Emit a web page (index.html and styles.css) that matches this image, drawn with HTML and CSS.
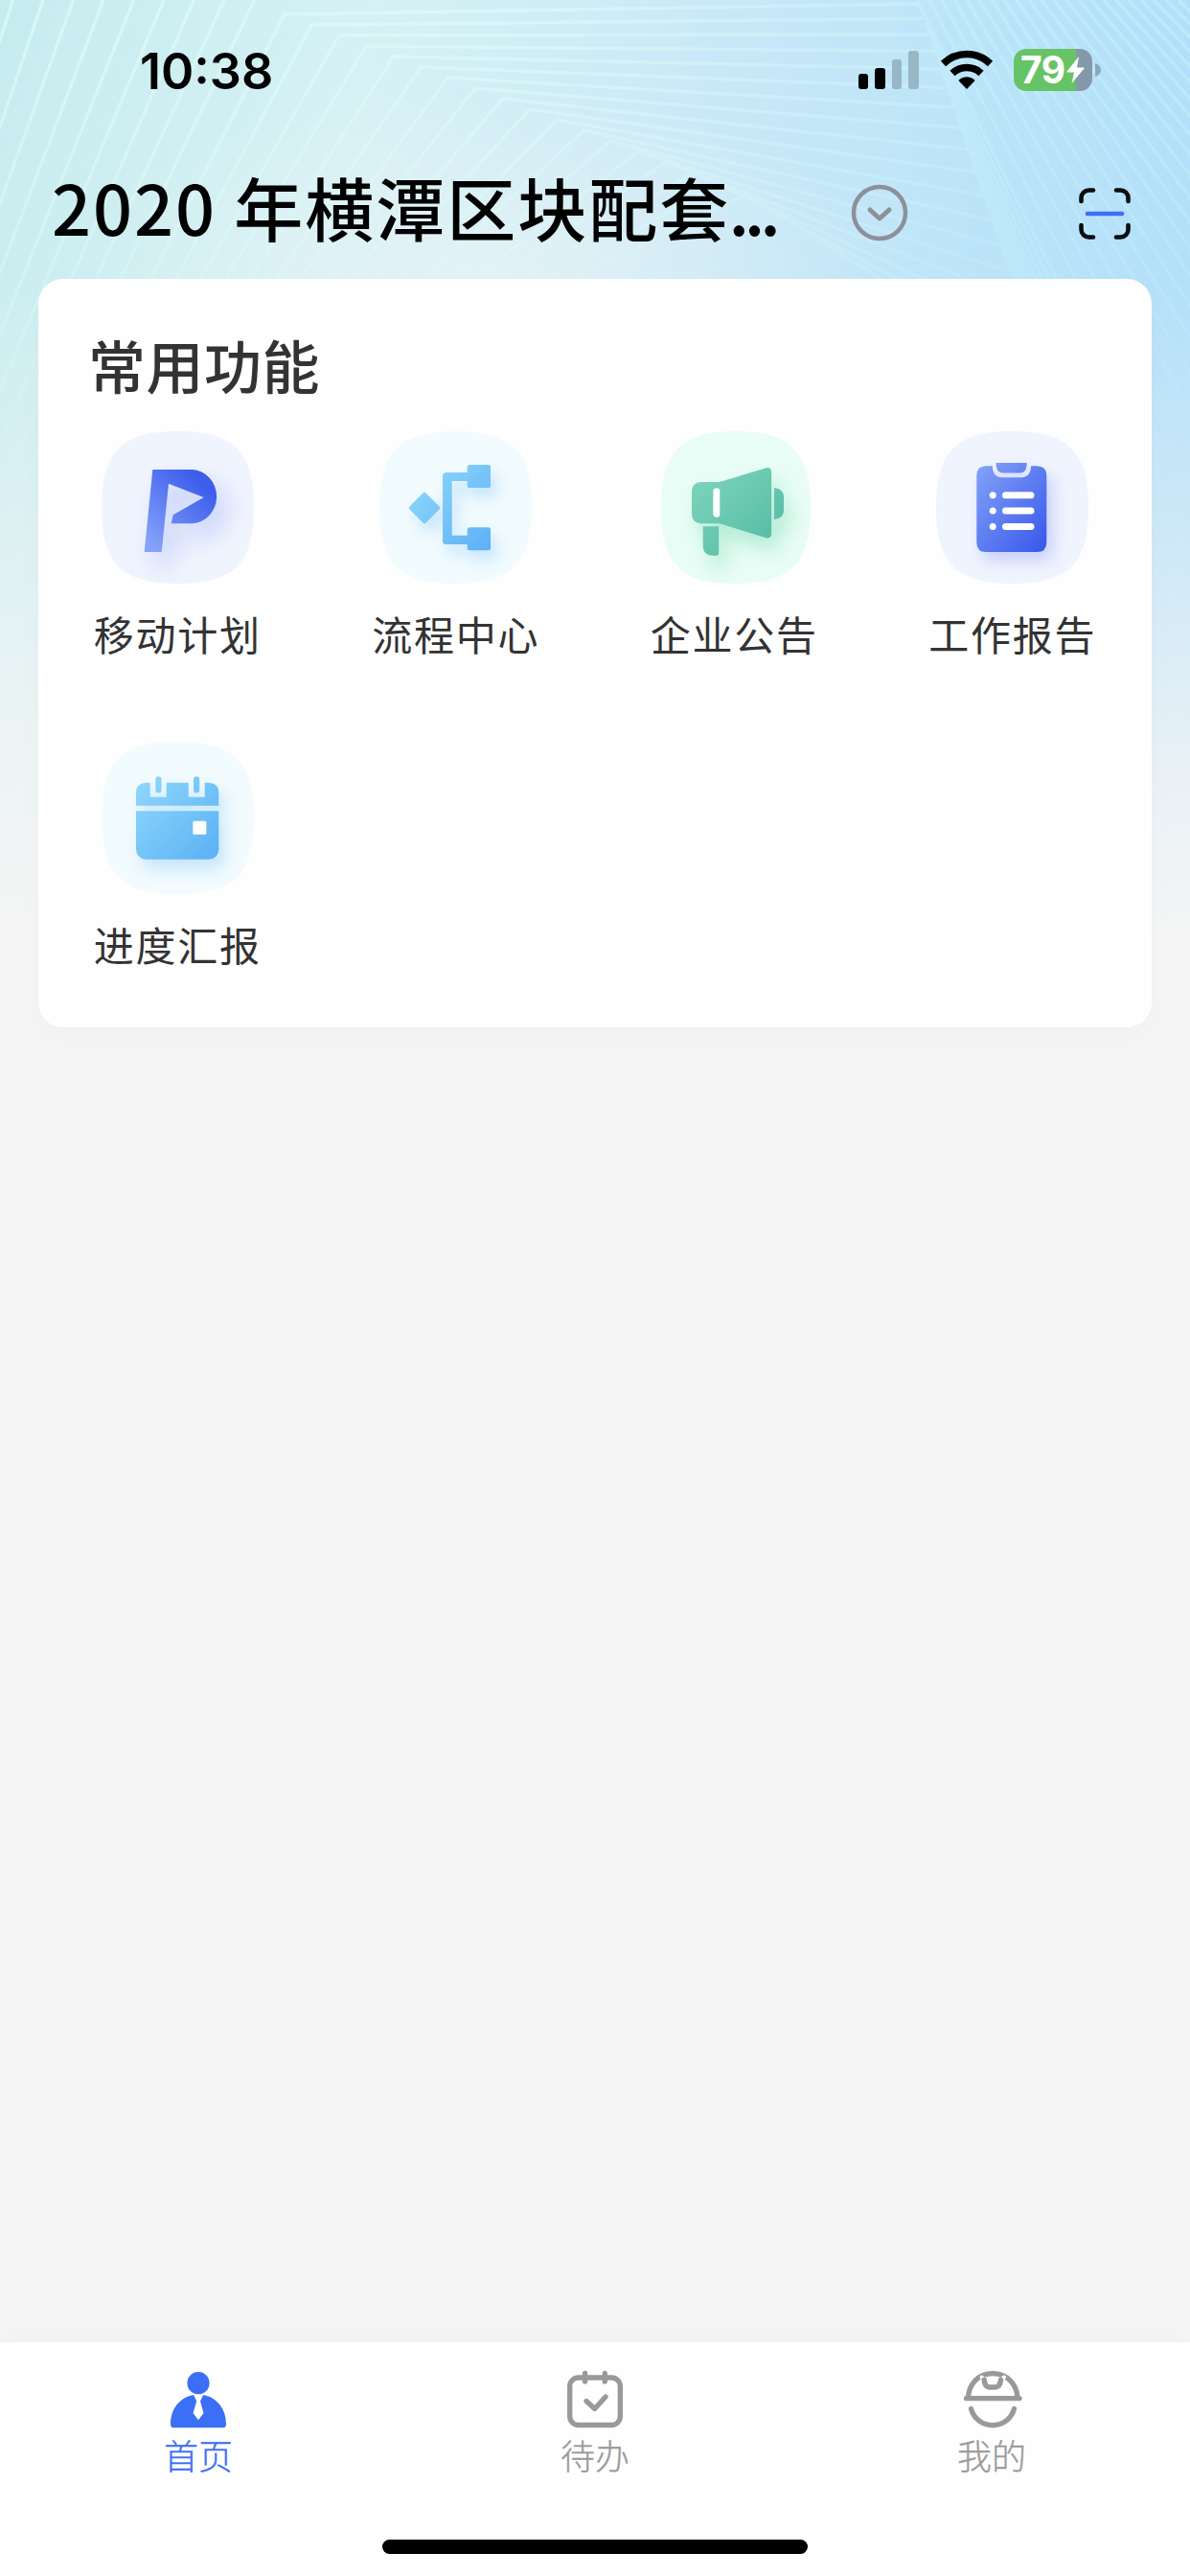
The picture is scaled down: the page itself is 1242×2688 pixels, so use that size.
FILE: index.html
```html
<!DOCTYPE html>
<html lang="zh-CN">
<head>
    <meta charset="UTF-8">
    <meta name="viewport" content="width=device-width, initial-scale=1.0">
    <title>首页</title>
    <link rel="stylesheet" href="styles.css">
</head>
<body>
    <svg class="backdrop" id="backdrop" viewBox="0 0 1242 1000"></svg>

    <div class="page">
        <header class="status-bar">
            <span class="time">10:38</span>
            <div class="status-icons">
                <svg width="63" height="40" viewBox="0 0 63 40">
                    <rect x="0" y="24" width="10" height="16" rx="3"/>
                    <rect x="17" y="18" width="11" height="22" rx="3"/>
                    <rect x="35" y="9" width="10" height="31" rx="3" fill="#97b6c6"/>
                    <rect x="52" y="0" width="11" height="40" rx="3" fill="#97b6c6"/>
                </svg>
                <svg class="wifi" width="56" height="42" viewBox="0 0 56 42">
                    <path d="M3.500 14.500a35 35 0 0 1 49 0M13 24.500a21.500 21.500 0 0 1 30 0" fill="none" stroke="#000" stroke-width="7.500"/>
                    <path d="M28 41l-8-8.200a1 1 0 0 1 0-1.500c4.500-4.100 11.500-4.100 16 0a1 1 0 0 1 0 1.500z"/>
                </svg>
                <div class="battery">
                    <span>79</span>
                    <svg width="19" height="28" viewBox="0 0 19 28"><path d="M13 0L0.500 15.500q-.5 1 .5 1h7L5.500 28 18.500 12.500q.5-1-.5-1h-7z" fill="#fff"/></svg>
                </div>
                <svg class="nub" width="6" height="14" viewBox="0 0 6 14"><path d="M0 0q6 2 6 7t-6 7z" fill="#8ca9b9"/></svg>
            </div>
        </header>

        <div class="title-bar">
            <h1>2020 年横潭区块配套<span class="dots">...</span></h1>
            <svg class="switch" width="60" height="60" viewBox="0 0 60 60" fill="none" stroke="#8e8f99" stroke-linecap="round" stroke-linejoin="round">
                <circle cx="30" cy="30" r="27" stroke-width="4.500"/>
                <path d="M20 27l10 9 10-9" stroke-width="5"/>
            </svg>
            <svg class="scan" width="54" height="54" viewBox="0 0 54 54" fill="none" stroke="#0b0d0f" stroke-width="4.600" stroke-linecap="round">
                <path d="M2.500 14V10.500a8 8 0 0 1 8-8H15M39 2.500h4.500a8 8 0 0 1 8 8V14M51.500 39v4.500a8 8 0 0 1-8 8H39M15 51.500h-4.500a8 8 0 0 1-8-8V39"/>
                <path d="M9 27h36" stroke="#3f6ff5"/>
            </svg>
        </div>

        <section class="card">
            <h2>常用功能</h2>
            <div class="grid">
                <a class="item">
                    <svg class="tile" viewBox="0 0 159 159">
                        <defs>
                            <linearGradient id="blueP" x1="0.200" y1="1" x2="0.850" y2="0.200"><stop offset="0" stop-color="#84a2f9"/><stop offset="1" stop-color="#3d5dec"/></linearGradient>
                            <linearGradient id="blue" x1="0" y1="0" x2="1" y2="1"><stop offset="0" stop-color="#84a2f9"/><stop offset="1" stop-color="#3757ea"/></linearGradient>
                            <linearGradient id="sky" gradientUnits="userSpaceOnUse" x1="35" y1="40" x2="122" y2="124"><stop offset="0" stop-color="#90d8fb"/><stop offset="1" stop-color="#5aaff5"/></linearGradient>
                            <linearGradient id="green" gradientUnits="userSpaceOnUse" x1="35" y1="40" x2="115" y2="120"><stop offset="0" stop-color="#80d5bd"/><stop offset="1" stop-color="#57bda5"/></linearGradient>
                        </defs>
                        <path d="M0 79.500C0 21 21 0 79.500 0S159 21 159 79.500 138 159 79.500 159 0 138 0 79.500z" fill="#f0f4fe"/>
                        <path class="glow-soft" d="M53.300 40H94.700a27 28.200 0 0 1 0 56.300H72.700l2-9 32-18.300L70 54.700 62.700 126h-18z" fill="url(#blueP)"/>
                    </svg>
                    <span>移动计划</span>
                </a>
                <a class="item">
                    <svg class="tile" viewBox="0 0 159 159">
                        <path d="M0 79.500C0 21 21 0 79.500 0S159 21 159 79.500 138 159 79.500 159 0 138 0 79.500z" fill="#f2fbfe"/>
                        <g class="glow-sky" fill="url(#sky)">
                            <path d="M45.500 64.500q1.500-1.500 3 0l14 14q1.500 1.500 0 3l-14 14q-1.500 1.500-3 0l-14-14q-1.500-1.500 0-3z"/>
                            <path d="M69.500 43H91.700v-5.500q0-2.500 2.500-2.500H113.500q2.500 0 2.500 2.500V56.500q0 2.500-2.500 2.500H94.200q-2.500 0-2.500-2.500V52H75.700v56.700h16v-6q0-2.500 2.500-2.500h19.300q2.500 0 2.500 2.500v19.100q0 2.500-2.500 2.500H94.200q-2.500 0-2.500-2.500V118H69.500q-3.500 0-3.500-3.500v-68q0-3.500 3.500-3.500z"/>
                        </g>
                    </svg>
                    <span>流程中心</span>
                </a>
                <a class="item">
                    <svg class="tile" viewBox="0 0 159 159">
                        <path d="M3 79.500C3 21 24 0 80.500 0S159 21 159 79.500 138 159 80.500 159 3 138 3 79.500z" fill="#e8fdf6"/>
                        <g class="glow-green" fill="url(#green)">
                            <path d="M44 53H64L112.500 38.300q5.600-1.300 5.600 4.500v64q0 5.500-5.600 4.500L64 96.300H44q-9-1-9-10V63q0-9 9-10z"/>
                            <path d="M121 59.300h1q9 1 9 9.500v13.500q0 8.500-9 9.400h-1zM46.700 99.300h16.500v27.500q0 3-3 3h-4.500q-8-.5-9-9z"/>
                        </g>
                        <rect x="57.300" y="59.300" width="7" height="30.400" rx="3.500" fill="#fff"/>
                    </svg>
                    <span>企业公告</span>
                </a>
                <a class="item">
                    <svg class="tile" viewBox="0 0 159 159">
                        <path d="M0 79.500C0 21 21 0 79.500 0S159 21 159 79.500 138 159 79.500 159 0 138 0 79.500z" fill="#f0f4fe"/>
                        <g class="glow-blue">
                            <path d="M52.300 36.300h6.500c0 8 4 12 10 12H89c6 0 10-4 10-12h6.300q10 0 10 10V116q0 10-10 10h-53q-10 0-10-10V46.300q0-10 10-10zM62.600 33H94.700c0 7-2.500 10.500-7 10.500H69.600c-4.500 0-7-3.500-7-10.500z" fill="url(#blue)"/>
                        </g>
                        <g stroke="#fff" stroke-width="7" stroke-linecap="round">
                            <path d="M59.200 66.700h.01M59.200 83h.01M59.200 99.500h.01M72.500 66.700h26.500M72.500 83h26.500M72.500 99.500h26.500"/>
                        </g>
                    </svg>
                    <span>工作报告</span>
                </a>
                <a class="item">
                    <svg class="tile" viewBox="0 0 159 159">
                        <path d="M0 79.500C0 21 21 0 79.500 0S159 21 159 79.500 138 159 79.500 159 0 138 0 79.500z" fill="#f2fbfe"/>
                        <g class="glow-sky" fill="url(#sky)">
                            <path d="M46 42.700h4.700v15h17v-15h23v15h17v-15h4.600q10 1 10 10v14H36v-14q0-9 10-10zM36 72.300h86.300v40.400q-1 9-10 10H46q-9-1-10-10z"/>
                            <rect x="56.300" y="36.300" width="6.200" height="17" rx="3.100"/>
                            <rect x="96" y="36.300" width="6.200" height="17" rx="3.100"/>
                        </g>
                        <rect x="95.300" y="82.700" width="14" height="14" rx="1.500" fill="#fff"/>
                    </svg>
                    <span>进度汇报</span>
                </a>
            </div>
        </section>

        <nav class="tab-bar">
            <a class="tab active">
                <svg width="64" height="64" viewBox="0 0 64 64" fill="#3b6ff6">
                    <circle cx="32" cy="14.700" r="11.600"/>
                    <path d="M27 27l3.200 6.500L26.500 46 32 53.200 37.500 46 34 33.500 37.200 27C52 30 61 42 61 57.500q0 3.700-3 3.700H6q-3 0-3-3.700C3 42 12 30 27 27z"/>
                </svg>
                <span>首页</span>
            </a>
            <a class="tab">
                <svg width="64" height="64" viewBox="0 0 64 64" fill="none" stroke="#999" stroke-width="5.300" stroke-linecap="round" stroke-linejoin="round">
                    <rect x="5.700" y="9" width="52.600" height="49.500" rx="9"/>
                    <path d="M21.600 4.500v8.500M42.300 4.500v8.500M23 33.500l8.700 8L43 29"/>
                </svg>
                <span>待办</span>
            </a>
            <a class="tab">
                <svg width="64" height="64" viewBox="0 0 64 64" fill="none" stroke="#999" stroke-width="5.300" stroke-linecap="round">
                    <path d="M7.500 30C8 16 18 4.700 33 4.700S58.500 16 59 30M5.500 30.700h55.500M10.500 41.500C17 64.500 49 64.500 55.500 41.500"/>
                    <path d="M21.500 8.500l3 3M45 8.500l-3 3" stroke="#fff" stroke-width="4"/>
                    <path d="M24.200 11.500c.5 5 2 7.500 5.300 7.500h6c3.500 0 5.500-2.500 6-7.500" stroke-width="5.500"/>
                </svg>
                <span>我的</span>
            </a>
            <div class="home-indicator"></div>
        </nav>
    </div>

    <script src="backdrop.js"></script>
</body>
</html>
```
FILE: styles.css
```css
* {
    box-sizing: border-box;
}
body {
    margin: 0;
    background-color: #f5f5f5;
    font-family: "Noto Sans CJK SC", sans-serif;
    color: #333;
}
svg {
    display: block;
    flex: none;
}
/* decorative layer behind the whole page */
.backdrop {
    position: absolute;
    top: 0;
    left: 0;
    width: 1242px;
    height: 1000px;
    background:
        linear-gradient(to bottom, rgba(245,245,245,0) 0, rgba(245,245,245,0.050) 290px, rgba(245,245,245,0.450) 560px, rgba(245,245,245,0.800) 780px, #f5f5f5 980px),
        radial-gradient(ellipse 420px 200px at 500px 290px, rgba(230,243,245,0.800), rgba(230,243,245,0)),
        linear-gradient(100deg, #c6ecef 0, #d6f1f5 28%, #cbe9f7 50%, #bbe4f8 72%, #aadcfa 100%);
}
.page {
    position: relative;
    height: 2688px;
    display: flex;
    flex-direction: column;
}
.status-bar {
    height: 146px;
    padding: 0 93px 0 146px;
    display: flex;
    align-items: center;
    justify-content: space-between;
}
.time {
    font: 600 52px/60px Inter, sans-serif;
    letter-spacing: 0;
    color: #000;
    padding-top: 3px;
}
.status-icons {
    display: flex;
    align-items: center;
}
.wifi {
    margin: 0 21px 0 22px;
}
.battery {
    width: 82px;
    height: 44px;
    border-radius: 13px;
    background: linear-gradient(to right, #66c466 65px, #8499a8 65px);
    display: flex;
    align-items: center;
    padding-left: 7px;
    gap: 1px;
}
.battery span {
    font: 700 39px/44px Inter, sans-serif;
    letter-spacing: -0.500px;
    color: #fff;
}
.nub {
    margin-left: 3px;
}
.title-bar {
    height: 145px;
    padding: 0 62px 0 54px;
    display: flex;
    align-items: center;
}
h1 {
    width: 834px;
    margin: -8px 0 0;
    font-size: 72px;
    font-weight: 500;
    line-height: 100px;
    letter-spacing: 2px;
    color: #000;
    white-space: nowrap;
}
.dots {
    margin-left: -2px;
    letter-spacing: -5px;
}
.switch {
    margin-top: 7px;
}
.scan {
    margin: 9px 0 0 auto;
}
.card {
    height: 781px;
    margin: 0 40px;
    background: #fefefe;
    border-radius: 26px;
    box-shadow: 0 10px 30px rgba(0,0,0,0.020);
}
h2 {
    margin: 0;
    padding: 45px 0 0 52px;
    font-size: 60px;
    font-weight: 500;
    line-height: 88px;
    letter-spacing: 0.500px;
}
.grid {
    display: grid;
    grid-template-columns: repeat(4, 1fr);
    grid-auto-rows: 324px;
    padding-top: 26px;
}
.item {
    display: flex;
    flex-direction: column;
    align-items: center;
}
.item span {
    margin-top: 21px;
    font-size: 42px;
    line-height: 62px;
    letter-spacing: 1.700px;
}
.tile {
    width: 159px;
    height: 159px;
}
.glow-soft {
    filter: drop-shadow(10px 14px 13px rgba(70,100,240,0.250));
}
.glow-blue {
    filter: drop-shadow(6px 9px 8px rgba(70,100,240,0.250));
}
.glow-sky {
    filter: drop-shadow(6px 10px 8px rgba(90,180,250,0.300));
}
.glow-green {
    filter: drop-shadow(8px 14px 10px rgba(70,200,140,0.300));
}
.tab-bar {
    height: 244px;
    margin-top: auto;
    background: #fefefe;
    box-shadow: 0 -6px 16px rgba(0,0,0,0.020);
    display: grid;
    grid-template-columns: repeat(3, 1fr);
    grid-template-rows: 206px auto;
}
.tab {
    display: flex;
    flex-direction: column;
    align-items: center;
    padding-top: 28px;
    color: #999;
}
.tab span {
    font-size: 36px;
    font-weight: 300;
    line-height: 52px;
    margin-top: -1px;
    -webkit-text-stroke: 0.300px;
}
.tab.active {
    color: #3b6ff6;
}
.home-indicator {
    grid-column: 1 / -1;
    justify-self: center;
    width: 444px;
    height: 15px;
    border-radius: 8px;
    background: #000;
}
```
FILE: backdrop.js
```js
// folded line pattern: each line goes up from the left, bends, runs to the fold and drops right
const svg = document.getElementById('backdrop');
let folded = '';
let fan = '';

for (let k = -20; k < 18; k++) {
    const ax = 297 + 28.4 * k;
    const ay = 15 + 11 * k;
    const bx = 158 + 26 * k;
    const slope = k < 0 ? 0.5 + 0.02 * k : (ax - bx) / (290 - ay);
    const topX = k < 0 ? 297 + 31.5 * k : ax;
    const topY = k < 0 ? 0 : ay;
    folded += `M${topX - slope * (620 - topY)} 620L${topX} ${topY}`;
    if (k >= 0) {
        const fy = 4 + 15 * k + 0.5 * k * k;
        folded += `L${957 + fy * 0.343} ${fy}`;
    }
}

for (let j = -14; j < 30; j++) {
    const startY = j < 0 ? -j * 24 : 0;
    const startX = j < 0 ? 957 + startY * 0.343 : 957 + 13 * j;
    const slope = Math.min(1, 0.5 + 0.025 * j + (j < 0 ? 0.01 * -j : 0));
    fan += `M${startX} ${startY}l${slope * 600} 600`;
}

svg.innerHTML = `
    <defs>
        <linearGradient id="fade" x1="0" y1="0" x2="0" y2="1">
            <stop offset="0" stop-color="#fff"/>
            <stop offset="0.28" stop-color="#888"/>
            <stop offset="0.6" stop-color="#000"/>
        </linearGradient>
        <linearGradient id="lineTone" gradientUnits="userSpaceOnUse" x1="0" y1="0" x2="1060" y2="0">
            <stop offset="0" stop-color="#dcfbf8" stop-opacity="0.75"/>
            <stop offset="0.5" stop-color="#dcfbf8" stop-opacity="0.7"/>
            <stop offset="1" stop-color="#d0f1fa" stop-opacity="0.45"/>
        </linearGradient>
        <mask id="fadeMask"><rect width="1242" height="1000" fill="url(#fade)"/></mask>
    </defs>
    <g mask="url(#fadeMask)" fill="none" stroke-width="3.5">
        <path d="${folded}" stroke="url(#lineTone)"/>
        <path d="${fan}" stroke="#c4f0fb" stroke-opacity="0.6"/>
    </g>`;
```
